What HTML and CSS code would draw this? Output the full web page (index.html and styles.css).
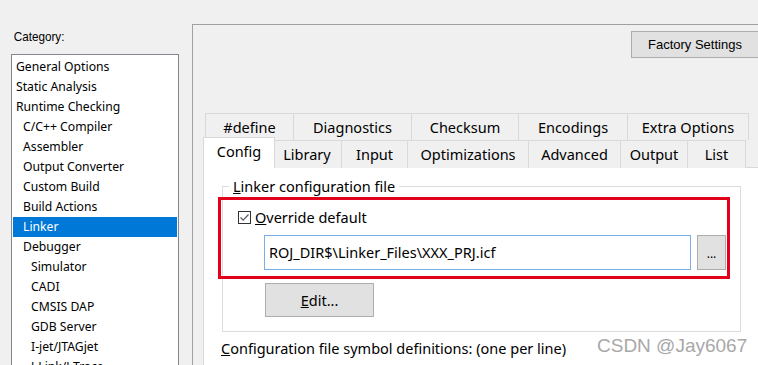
FILE: index.html
```html
<!DOCTYPE html>
<html>
<head>
<meta charset="utf-8">
<link rel="stylesheet" href="styles.css">
</head>
<body>
<div class="page">
  <div class="left">
    <div class="cat-label">Category:</div>
    <ul class="cat-list">
      <li class="l0">General Options</li>
      <li class="l0">Static Analysis</li>
      <li class="l0">Runtime Checking</li>
      <li class="l1">C/C++ Compiler</li>
      <li class="l1">Assembler</li>
      <li class="l1">Output Converter</li>
      <li class="l1">Custom Build</li>
      <li class="l1">Build Actions</li>
      <li class="l1 sel">Linker</li>
      <li class="l1">Debugger</li>
      <li class="l2">Simulator</li>
      <li class="l2">CADI</li>
      <li class="l2">CMSIS DAP</li>
      <li class="l2">GDB Server</li>
      <li class="l2">I-jet/JTAGjet</li>
      <li class="l2">J-Link/J-Trace</li>
    </ul>
  </div>
  <div class="panel">
    <div class="top-row">
      <button class="btn factory">Factory Settings</button>
    </div>
    <div class="tabs">
      <div class="tab-row back">
        <div class="tab w-define">#define</div>
        <div class="tab w-diag">Diagnostics</div>
        <div class="tab w-check">Checksum</div>
        <div class="tab w-enc">Encodings</div>
        <div class="tab w-extra">Extra Options</div>
      </div>
      <div class="tab-row front">
        <div class="tab active w-config">Config</div>
        <div class="tab w-lib">Library</div>
        <div class="tab w-input">Input</div>
        <div class="tab w-opt">Optimizations</div>
        <div class="tab w-adv">Advanced</div>
        <div class="tab w-out">Output</div>
        <div class="tab w-list">List</div>
      </div>
    </div>
    <div class="content">
      <fieldset class="group">
        <legend><u>L</u>inker configuration file</legend>
        <div class="highlight">
          <label class="check-row">
            <span class="checkbox">
              <svg width="11" height="11" viewBox="0 0 11 11"><path d="M1.5 5.5 L4.2 8.2 L9.5 2.5" fill="none" stroke="#5a5a5a" stroke-width="1.2"/></svg>
            </span>
            <span><u>O</u>verride default</span>
          </label>
          <div class="path-row">
            <div class="path-input">ROJ_DIR$\Linker_Files\XXX_PRJ.icf</div>
            <button class="btn dots">...</button>
          </div>
        </div>
        <button class="btn edit"><u>E</u>dit...</button>
      </fieldset>
      <div class="defs"><u>C</u>onfiguration file symbol definitions: (one per line)</div>
    </div>
  </div>
</div>
<div class="watermark">CSDN @Jay6067</div>
</body>
</html>
```
FILE: styles.css
```css
html, body {
  margin: 0;
  padding: 0;
  background: #f0f0f0;
  width: 758px;
  height: 365px;
  overflow: hidden;
}
body {
  font-family: "Noto Sans", "Open Sans", sans-serif;
  color: #000;
  position: relative;
}
.page {
  display: flex;
  align-items: flex-start;
}
.left {
  width: 181px;
  padding-left: 11px;
  padding-top: 29px;
  box-sizing: border-box;
  flex: none;
}
.cat-label {
  font-family: "Liberation Sans", sans-serif;
  font-size: 13px;
  height: 25px;
  padding-left: 3px;
  transform: scaleX(0.9);
  transform-origin: left;
}
.cat-list {
  list-style: none;
  margin: 0;
  padding: 2px 1px 1px 1px;
  width: 168px;
  height: 320px;
  box-sizing: border-box;
  border: 1px solid #828790;
  background: #fff;
  font-size: 12.2px;
  overflow: hidden;
}
.cat-list li {
  height: 20px;
  line-height: 20px;
  white-space: nowrap;
}
.cat-list .l0 { padding-left: 3px; }
.cat-list .l1 { padding-left: 10px; }
.cat-list .l2 { padding-left: 18px; }
.cat-list .sel {
  background: #0078d7;
  color: #fff;
}
.panel {
  flex: 1;
  margin-left: 11px;
  margin-top: 24px;
  height: 341px;
  border-top: 1px solid #a0a0a0;
  border-left: 1px solid #a0a0a0;
  padding-left: 10px;
  box-sizing: border-box;
}
.top-row {
  display: flex;
  justify-content: flex-start;
  padding-top: 6px;
  padding-left: 428px;
  height: 88px;
  box-sizing: border-box;
}
.btn {
  font-family: "Noto Sans", sans-serif;
  background: #e1e1e1;
  border: 1px solid #adadad;
  color: #000;
  padding: 0;
  margin: 0;
}
.factory {
  width: 140px;
  height: 27px;
  font-family: "Liberation Sans", sans-serif;
  font-size: 13px;
  text-align: left;
  padding-left: 16px;
}
.tabs {
  font-size: 14.5px;
}
.tab-row {
  display: flex;
  padding-left: 2px;
}
.tab-row.back {
  height: 27px;
}
.tab-row.front {
  height: 28px;
}
.tab {
  box-sizing: border-box;
  border: 1px solid #d9d9d9;
  border-bottom: none;
  margin-right: -1px;
  text-align: center;
  background: #f0f0f0;
  line-height: 26px;
}
.tab.active {
  background: #fff;
  margin-left: -2px;
  margin-top: -3px;
  height: 31px;
  line-height: 26px;
  position: relative;
  z-index: 1;
  border-color: #d9d9d9;
}
.w-define { width: 89px; }
.w-diag { width: 119px; }
.w-check { width: 108px; }
.w-enc { width: 110px; }
.w-extra { width: 122px; }
.w-config { width: 72px; margin-right: -3px; }
.w-lib { width: 70px; }
.w-input { width: 67px; }
.w-opt { width: 122px; }
.w-adv { width: 93px; }
.w-out { width: 68px; }
.w-list { width: 59px; }
.content {
  background: #fff;
  height: 200px;
  border-left: 1px solid #d9d9d9;
  border-top: 1px solid #d9d9d9;
  margin-top: -1px;
  padding-left: 18px;
  padding-top: 9px;
  font-size: 14.5px;
}
.group {
  margin: 0;
  width: 519px;
  height: 155px;
  box-sizing: border-box;
  border: 1px solid #dcdcdc;
  padding: 0;
  position: relative;
}
.group legend {
  margin-left: 6px;
  padding: 0 4px;
  line-height: 18px;
}
.highlight {
  margin-left: -5px;
  margin-top: 2px;
  width: 512px;
  height: 82px;
  box-sizing: border-box;
  border: 3px solid #e2001a;
  padding-top: 7px;
  padding-left: 17px;
}
.check-row {
  display: flex;
  align-items: center;
  gap: 4px;
  height: 20px;
}
.checkbox {
  width: 13px;
  height: 13px;
  box-sizing: border-box;
  border: 1px solid #333;
  display: flex;
  align-items: center;
  justify-content: center;
  background: #fff;
}
.path-row {
  display: flex;
  align-items: stretch;
  margin-top: 8px;
  padding-left: 26px;
  gap: 6px;
}
.path-input {
  width: 427px;
  height: 35px;
  box-sizing: border-box;
  border: 1px solid #7aaee8;
  padding-left: 4px;
  line-height: 32px;
  white-space: nowrap;
  overflow: hidden;
}
.dots {
  width: 29px;
  height: 35px;
  font-size: 12px;
  line-height: 12px;
  padding-top: 3px;
}
.edit {
  display: block;
  margin-top: 4px;
  margin-left: 42px;
  width: 109px;
  height: 34px;
  font-size: 14.5px;
}
.defs {
  margin-top: 6px;
  margin-left: -1px;
  white-space: nowrap;
}
.watermark {
  position: absolute;
  left: 597px;
  top: 335px;
  font-family: "Liberation Sans", sans-serif;
  font-size: 19px;
  color: #a8a8a8;
}
```
